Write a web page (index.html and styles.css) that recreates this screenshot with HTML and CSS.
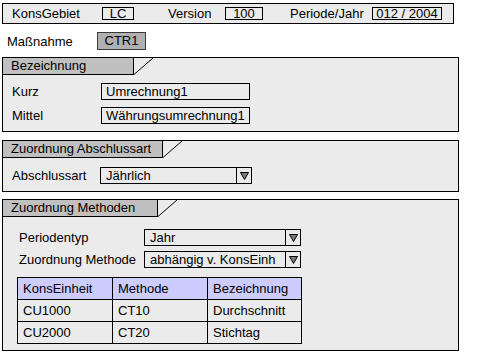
FILE: index.html
```html
<!DOCTYPE html>
<html lang="de">
<head>
<meta charset="utf-8">
<title>Maßnahme</title>
<link rel="stylesheet" href="styles.css">
</head>
<body>
<div class="screen">
  <div class="topbar">
    <span class="tlabel l1">KonsGebiet</span><span class="field f1">LC</span>
    <span class="tlabel l2">Version</span><span class="field f2">100</span>
    <span class="tlabel l3">Periode/Jahr</span><span class="field f3">012 / 2004</span>
  </div>

  <div class="measure">
    <span class="mlabel">Maßnahme</span><span class="ctr">CTR1</span>
  </div>

  <section class="group g1">
    <div class="tabrow">
      <div class="tab t1">Bezeichnung</div>
      <svg class="slant" width="20" height="17" viewBox="0 0 20 17"><line x1="0" y1="16.5" x2="19" y2="0" stroke="#000" stroke-width="1"/></svg>
    </div>
    <div class="body b1">
      <span class="lbl">Kurz</span><span class="input">Umrechnung1</span>
      <span class="lbl">Mittel</span><span class="input">Währungsumrechnung1</span>
    </div>
  </section>

  <section class="group g2">
    <div class="tabrow">
      <div class="tab t2">Zuordnung Abschlussart</div>
      <svg class="slant" width="20" height="17" viewBox="0 0 20 17"><line x1="0" y1="16.5" x2="19" y2="0" stroke="#000" stroke-width="1"/></svg>
    </div>
    <div class="body b2">
      <span class="lbl">Abschlussart</span>
      <span class="select"><span class="val">Jährlich</span><span class="arrow"><svg width="9" height="8" viewBox="0 0 9 8"><polygon points="0.5,0.5 8.5,0.5 4.5,7.5" fill="#7a7a7a" stroke="#000" stroke-width="1"/></svg></span></span>
    </div>
  </section>

  <section class="group g3">
    <div class="tabrow">
      <div class="tab t3">Zuordnung Methoden</div>
      <svg class="slant" width="20" height="17" viewBox="0 0 20 17"><line x1="0" y1="16.5" x2="19" y2="0" stroke="#000" stroke-width="1"/></svg>
    </div>
    <div class="body b3">
      <div class="form3">
        <span class="lbl">Periodentyp</span>
        <span class="select"><span class="val">Jahr</span><span class="arrow"><svg width="9" height="8" viewBox="0 0 9 8"><polygon points="0.5,0.5 8.5,0.5 4.5,7.5" fill="#7a7a7a" stroke="#000" stroke-width="1"/></svg></span></span>
        <span class="lbl">Zuordnung Methode</span>
        <span class="select"><span class="val">abhängig v. KonsEinh</span><span class="arrow"><svg width="9" height="8" viewBox="0 0 9 8"><polygon points="0.5,0.5 8.5,0.5 4.5,7.5" fill="#7a7a7a" stroke="#000" stroke-width="1"/></svg></span></span>
      </div>
      <table class="grid">
        <thead>
          <tr><th class="c1">KonsEinheit</th><th class="c2">Methode</th><th class="c3">Bezeichnung</th></tr>
        </thead>
        <tbody>
          <tr><td>CU1000</td><td>CT10</td><td>Durchschnitt</td></tr>
          <tr><td>CU2000</td><td>CT20</td><td>Stichtag</td></tr>
        </tbody>
      </table>
    </div>
  </section>
</div>
</body>
</html>
```

FILE: styles.css
```css
* { box-sizing: border-box; }

body {
  margin: 0;
  background: #ffffff;
  color: #000000;
  font-family: "Liberation Sans", Arial, sans-serif;
  font-size: 13px;
}

.screen {
  padding: 3px 0 0 2px;
}

/* top bar */
.topbar {
  display: flex;
  align-items: center;
  width: 452px;
  height: 21px;
  border: 1px solid #000;
  background: #ebebeb;
  padding-left: 9px;
}
.tlabel { white-space: nowrap; line-height: 15px; }
.l1 { width: 90px; }
.l2 { width: 57px; margin-left: 34px; }
.l3 { width: 82px; margin-left: 27px; }

.field {
  height: 13px;
  border: 1px solid #000;
  line-height: 11px;
  text-align: center;
  white-space: nowrap;
}
.f1 { width: 32px; }
.f2 { width: 38px; }
.f3 { width: 70px; }

/* Maßnahme */
.measure {
  display: flex;
  align-items: center;
  height: 18px;
  margin-top: 8px;
  padding-left: 5px;
}
.mlabel { width: 90px; }
.ctr {
  width: 49px;
  height: 18px;
  line-height: 16px;
  background: #b0b0b0;
  border: 1px solid #3a3a3a;
  text-align: center;
}

/* groups */
.group {
  width: 457px;
  border: 1px solid #000;
  background: #ebebeb;
}
.g1 { margin-top: 7px; }
.g2 { margin-top: 8px; }
.g3 { margin-top: 7px; }

.tabrow {
  display: flex;
  align-items: flex-start;
  height: 17px;
}
.tab {
  height: 17px;
  line-height: 16px;
  background: #c0c0c0;
  border-right: 1px solid #000;
  border-bottom: 1px solid #000;
  padding-left: 8px;
  white-space: nowrap;
}
.t1 { width: 131px; }
.t2 { width: 160px; }
.t3 { width: 155px; }
.slant { display: block; }

.lbl { white-space: nowrap; line-height: 17px; }

.input {
  height: 17px;
  border: 1px solid #000;
  line-height: 15px;
  padding-left: 4px;
  white-space: nowrap;
  overflow: hidden;
}

.b1 {
  display: grid;
  grid-template-columns: 89px 149px;
  row-gap: 7px;
  padding: 8px 0 7px 9px;
}

.select {
  display: flex;
  height: 17px;
  border: 1px solid #000;
}
.select .val {
  flex: 1;
  line-height: 15px;
  padding-left: 5px;
  white-space: nowrap;
  overflow: hidden;
}
.select .arrow {
  width: 15px;
  border-left: 1px solid #000;
  display: flex;
  align-items: center;
  justify-content: center;
}
.select .arrow svg { display: block; }

.b2 {
  display: grid;
  grid-template-columns: 88px 152px;
  padding: 9px 0 7px 9px;
}

.b3 {
  padding: 12px 0 6px 14px;
}
.form3 {
  display: grid;
  grid-template-columns: 125px 157px;
  row-gap: 5px;
  padding-left: 2px;
}

.grid {
  margin-top: 9px;
  width: 284px;
  border-collapse: collapse;
  table-layout: fixed;
}
.grid th, .grid td {
  border: 1px solid #000;
  height: 22px;
  padding: 0 0 0 5px;
  text-align: left;
  font-weight: normal;
  white-space: nowrap;
  overflow: hidden;
}
.grid th { background: #ccccff; }
.grid .c1 { width: 95px; }
.grid .c2 { width: 95px; }
.grid .c3 { width: 94px; }
```
